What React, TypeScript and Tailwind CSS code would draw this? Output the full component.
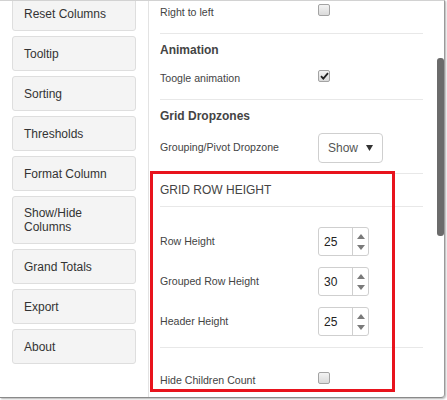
import React from 'react';

const menuItems = ['Reset Columns', 'Tooltip', 'Sorting', 'Thresholds', 'Format Column', 'Show/Hide Columns', 'Grand Totals', 'Export', 'About'];

const Checkbox: React.FC<{ checked?: boolean }> = ({ checked }) => (
    <div className="flex h-[12px] w-[12px] items-center justify-center rounded-[2px] border border-[#a3a3a3] bg-gradient-to-b from-[#f3f3f3] to-[#dadada]">
        {checked && (
            <svg width="9" height="8" viewBox="0 0 9 8">
                <path d="M1 4.2 L3.3 6.6 L8 1.2" fill="none" stroke="#222" strokeWidth="1.8" />
            </svg>
        )}
    </div>
);

const Spinner: React.FC<{ value: string }> = ({ value }) => (
    <div className="flex h-[29px] w-[51px] rounded-[3px] border border-[#cfcfcf] bg-white">
        <div className="flex w-[33px] items-center pl-[5px] text-[12px] text-[#222]">{value}</div>
        <div className="flex flex-1 flex-col items-center justify-center gap-[6px] border-l border-[#cfcfcf]">
            <svg width="8" height="5" viewBox="0 0 8 5"><path d="M0 5 L4 0 L8 5 Z" fill="#7a7a7a" /></svg>
            <svg width="8" height="5" viewBox="0 0 8 5"><path d="M0 0 L8 0 L4 5 Z" fill="#7a7a7a" /></svg>
        </div>
    </div>
);

const Row: React.FC<{ label: string; className?: string; labelClass?: string; children: React.ReactNode }> = ({ label, className, labelClass, children }) => (
    <div className={`flex items-center ${className ?? ''}`}>
        <div className={`w-[158px] text-[10.6px] text-[#444] ${labelClass ?? ''}`}>{label}</div>
        {children}
    </div>
);

const App: React.FC = () => {
    return (
        <div className="relative h-[400px] w-[447px] bg-white" style={{ fontFamily: '"Liberation Sans", Arial, sans-serif' }}>
            <div className="flex h-[398px] w-[445px] overflow-hidden rounded-br-[4px] border-t border-r border-b border-t-[#d2d2d2] border-r-[#9a9a9a] border-b-[#8a8a8a] shadow-[1px_1px_2px_rgba(0,0,0,0.3)]">
                {/* Menu */}
                <div className="flex w-[149px] shrink-0 flex-col gap-[5px] border-r border-[#e3e3e3] pl-[12px] pt-0">
                    <div className="mt-[-5px]" />
                    {menuItems.map((item) => (
                        <div
                            key={item}
                            className={`flex w-[124px] items-center rounded-[3px] border border-[#dedede] bg-[#f4f4f4] px-[11px] text-[12px] leading-[14px] text-[#333] ${item === 'Show/Hide Columns' ? 'h-[48px]' : 'h-[35px]'} ${item === 'Reset Columns' ? 'mt-[-5px]' : ''}`}
                        >
                            {item === 'Show/Hide Columns' ? <span className="w-[80px]">Show/Hide Columns</span> : item}
                        </div>
                    ))}
                </div>

                {/* Settings */}
                <div className="flex w-[288px] flex-col pl-[11px]">
                    <div className="flex w-[263px] flex-col">
                        <Row label="Right to left" className="mt-[-1px] h-[20px]" labelClass="pt-[6px]"><Checkbox /></Row>
                        <div className="mt-[13px] h-px bg-[#e8e8e8]" />
                        <div className="mt-[7px] flex h-[18px] items-center text-[12px] font-bold text-[#444]">Animation</div>
                        <Row label="Toogle animation" className="mt-[7px] h-[20px]" labelClass="pt-[6px]"><Checkbox checked /></Row>
                        <div className="mt-[13px] h-px bg-[#e8e8e8]" />
                        <div className="mt-[7px] flex h-[18px] items-center text-[12px] font-bold text-[#444]">Grid Dropzones</div>
                        <Row label="Grouping/Pivot Dropzone" className="mt-[8px] h-[30px]">
                            <div className="flex h-[30px] w-[65px] items-center justify-between rounded-[4px] border border-[#cfcfcf] bg-white pl-[9px] pr-[9px] text-[12px] text-[#555]">
                                <span>Show</span>
                                <svg width="7" height="6" viewBox="0 0 7 6"><path d="M0 0 L7 0 L3.5 6 Z" fill="#333" /></svg>
                            </div>
                        </Row>
                        <div className="mt-[10px] h-px bg-[#e8e8e8]" />
                        <div className="mt-[7px] flex h-[18px] items-center text-[12px] text-[#444]">GRID ROW HEIGHT</div>
                        <div className="mt-[7px] h-px bg-[#e8e8e8]" />
                        <Row label="Row Height" className="mt-[20px] h-[29px]"><Spinner value="25" /></Row>
                        <Row label="Grouped Row Height" className="mt-[11px] h-[29px]"><Spinner value="30" /></Row>
                        <Row label="Header Height" className="mt-[11px] h-[29px]"><Spinner value="25" /></Row>
                        <div className="mt-[11px] h-px bg-[#e8e8e8]" />
                        <Row label="Hide Children Count" className="mt-[20px] h-[20px]" labelClass="pt-[6px]"><Checkbox /></Row>
                    </div>
                </div>

                {/* Scrollbar */}
                <div className="w-[7px] shrink-0">
                    <div className="mt-[57px] h-[178px] rounded-[3px] bg-[#6b6b6b]" />
                </div>
            </div>

            {/* Annotation */}
            <div className="pointer-events-none absolute left-[150px] top-[171px] h-[221px] w-[245px] border-[3px] border-[#e8131d]" />
        </div>
    );
};

export default App;
